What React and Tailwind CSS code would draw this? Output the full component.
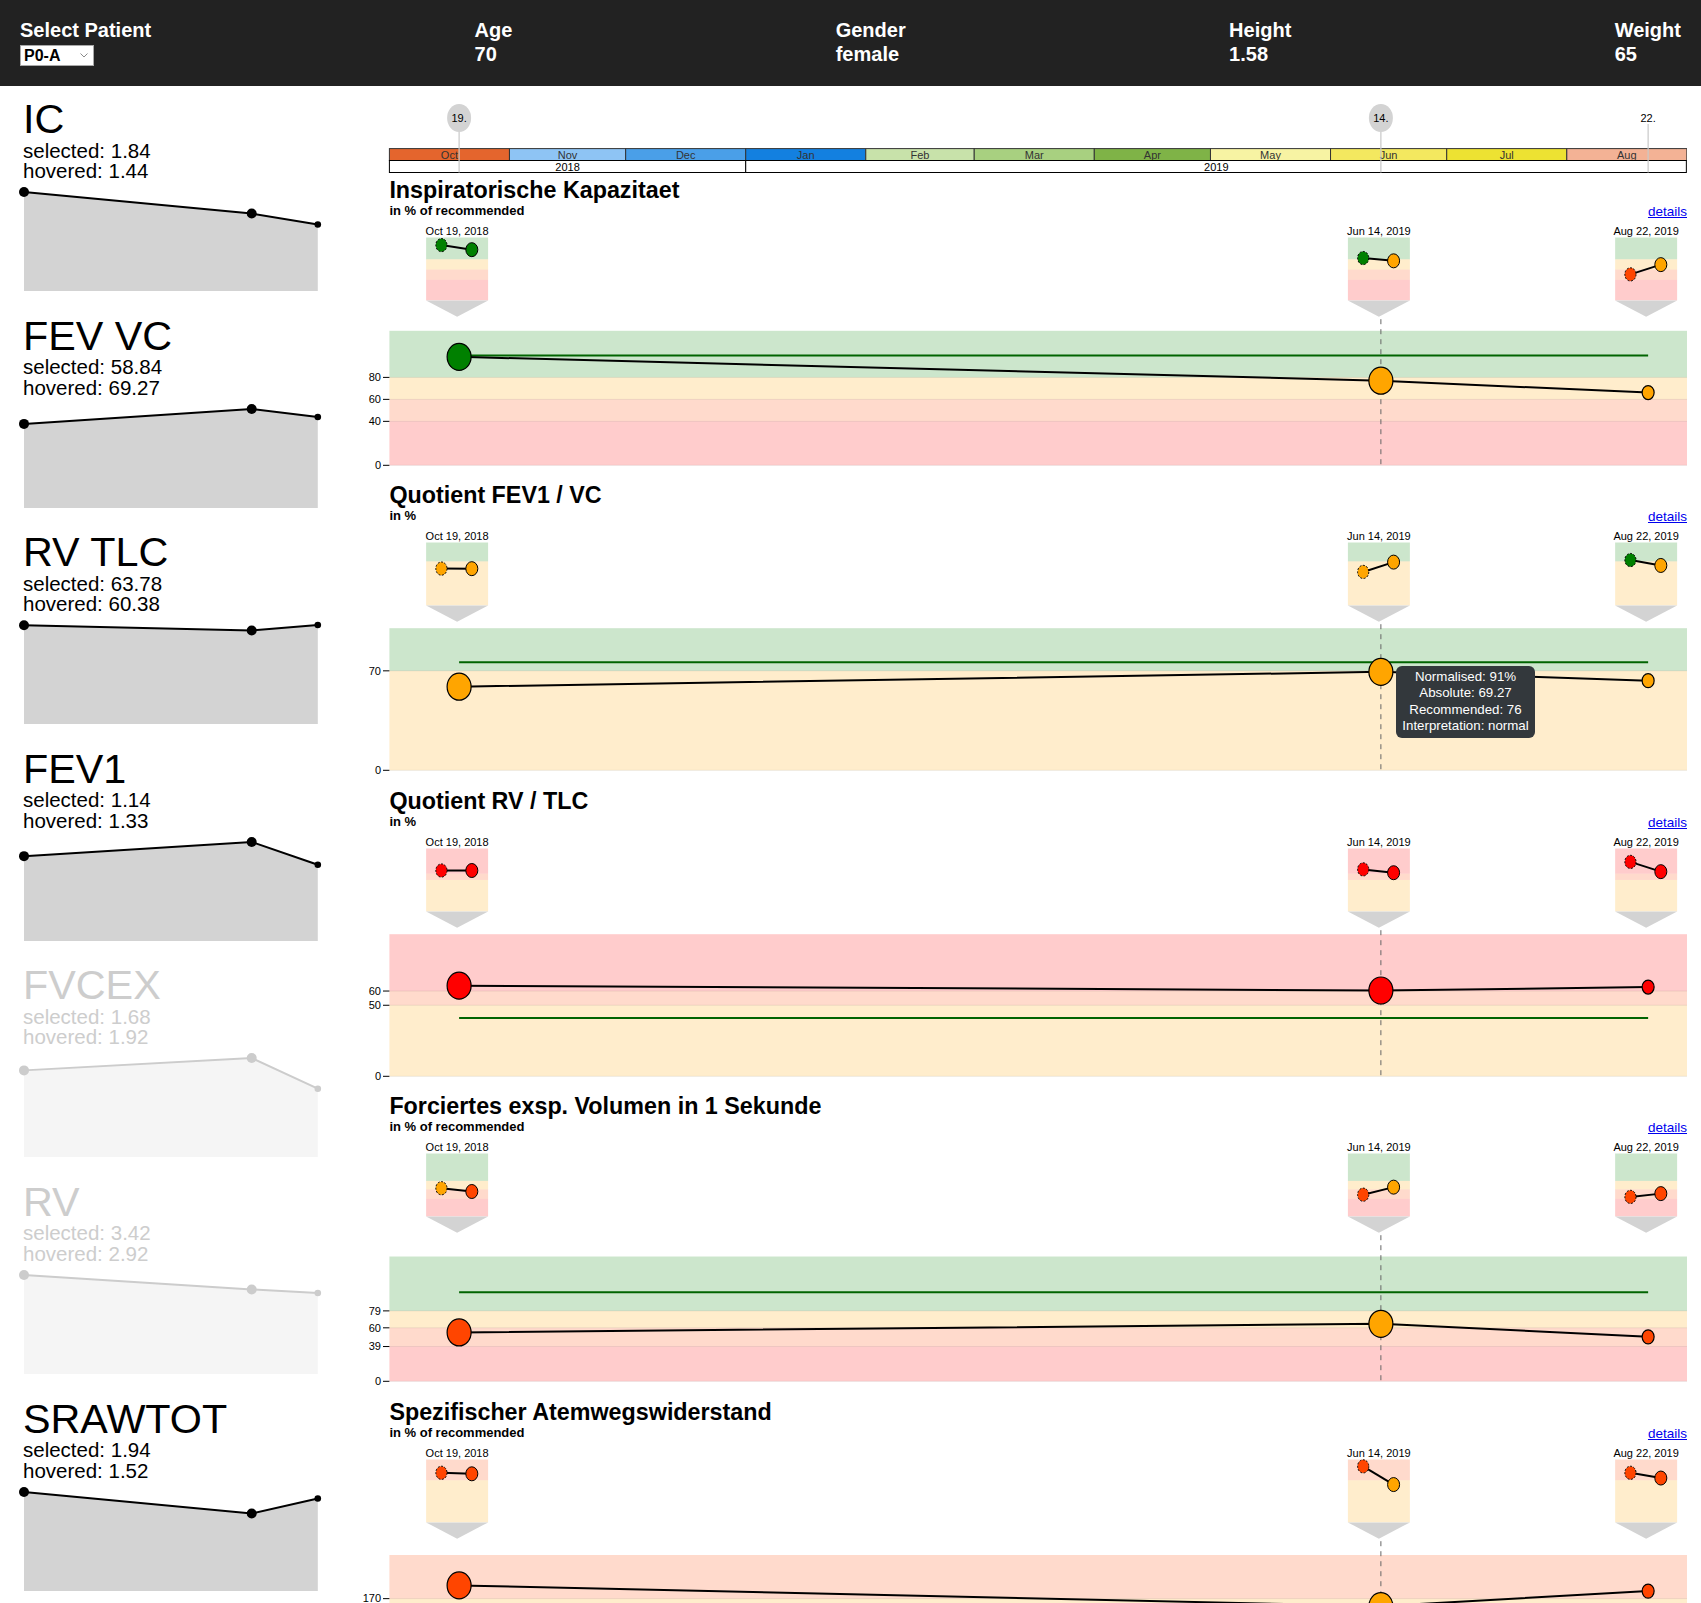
import React from 'react';

const G = '#008000';
const O = '#ffa500';
const OR = '#ff4500';
const R = '#ff0000';

// time axis: days since Oct 1, 2018
const X = (d) => 49.4 + d * 3.873;
const DATES = [18, 256, 325];
const LABELS = ['Oct 19, 2018', 'Jun 14, 2019', 'Aug 22, 2019'];
const MARKS = ['19.', '14.', '22.'];
// svg starts this far below the title's cap line
const OFF = 39;

const MONTHS = [
  { n: 'Oct', s: 0, e: 31, c: '#e4652d' },
  { n: 'Nov', s: 31, e: 61, c: '#8ec4f4' },
  { n: 'Dec', s: 61, e: 92, c: '#4a9fe8' },
  { n: 'Jan', s: 92, e: 123, c: '#1380e0' },
  { n: 'Feb', s: 123, e: 151, c: '#c8e2aa' },
  { n: 'Mar', s: 151, e: 182, c: '#a8d080' },
  { n: 'Apr', s: 182, e: 212, c: '#7fb347' },
  { n: 'May', s: 212, e: 243, c: '#f7f3a3' },
  { n: 'Jun', s: 243, e: 273, c: '#f3e85f' },
  { n: 'Jul', s: 273, e: 304, c: '#ede232' },
  { n: 'Aug', s: 304, e: 335, c: '#f3b295' },
];

const SPARKS = [
  { name: 'IC', sel: 1.84, hov: 1.44, last: 1.236 },
  { name: 'FEV VC', sel: 58.84, hov: 69.27, last: 63.7 },
  { name: 'RV TLC', sel: 63.78, hov: 60.38, last: 63.9 },
  { name: 'FEV1', sel: 1.14, hov: 1.33, last: 1.024 },
  { name: 'FVCEX', sel: 1.68, hov: 1.92, last: 1.325, faded: true },
  { name: 'RV', sel: 3.42, hov: 2.92, last: 2.798, faded: true },
  { name: 'SRAWTOT', sel: 1.94, hov: 1.52, last: 1.813 },
];

const CHARTS = [
  {
    title: 'Inspiratorische Kapazitaet', unit: 'in % of recommended', pTop: 150.8, yMax: 122.4,
    zones: [[80, G], [60, O], [40, OR], [0, R]], ticks: [80, 60, 40, 0], ref: 100,
    data: [98.7, 77, 66.2], mini: [[107.6, 98.7], [82.4, 77], [50.6, 69.6]],
  },
  {
    title: 'Quotient FEV1 / VC', unit: 'in %', pTop: 143.2, yMax: 100,
    zones: [[70, G], [0, O]], ticks: [70, 0], ref: 76,
    data: [58.84, 69.27, 63.1], mini: [[58.5, 58.4], [53.2, 68.8], [72.1, 63.5]], tooltip: true,
  },
  {
    title: 'Quotient RV / TLC', unit: 'in %', pTop: 143.2, yMax: 100,
    zones: [[60, R], [50, OR], [0, O]], ticks: [60, 50, 0], ref: 41,
    data: [63.78, 60.38, 62.8], mini: [[65, 65], [66.8, 61.5], [78.7, 63.2]],
  },
  {
    title: 'Forciertes exsp. Volumen in 1 Sekunde', unit: 'in % of recommended', pTop: 160.5, yMax: 140,
    zones: [[79, G], [60, O], [39, OR], [0, R]], ticks: [79, 60, 39, 0], ref: 100,
    data: [54.8, 64.5, 49.9], mini: [[62.7, 55.4], [48.3, 65.1], [43.4, 50.7]],
  },
  {
    title: 'Spezifischer Atemwegswiderstand', unit: 'in % of recommended', pTop: 153, yMax: 253.7,
    zones: [[170, OR], [0, O]], ticks: [170, 0], ref: 100,
    data: [195.4, 155.6, 184.5], mini: [[200, 196], [226, 152.6], [200, 178.9]],
  },
];

function Spark({ s }) {
  const max = Math.max(s.sel, s.hov, s.last);
  const y = (v) => 109 - (v / max) * 99;
  const pts = [[24, y(s.sel)], [251.7, y(s.hov)], [317.8, y(s.last)]];
  const line = pts.map((p) => p.join(',')).join(' ');
  const ink = s.faded ? '#cccccc' : '#000000';
  return (
    <div className={`h-[216.6px] ${s.faded ? 'text-[#cdcdcd]' : 'text-black'}`}>
      <div className="pl-[23px] pt-[0.6px] text-[41.3px] leading-[41.4px]">{s.name}</div>
      <div className="pl-[23px] text-[20.5px] leading-[20.6px]">selected: {s.sel}</div>
      <div className="pl-[23px] text-[20.5px] leading-[20.6px]">hovered: {s.hov}</div>
      <svg width="340" height="112" className="mt-[0.3px] block">
        <polygon points={`24,109 ${line} 317.8,109`} fill={s.faded ? '#f5f5f5' : '#d3d3d3'} />
        <polyline points={line} fill="none" stroke={ink} strokeWidth="2" />
        <circle cx={pts[0][0]} cy={pts[0][1]} r="5" fill={ink} />
        <circle cx={pts[1][0]} cy={pts[1][1]} r="5" fill={ink} />
        <circle cx={pts[2][0]} cy={pts[2][1]} r="3.3" fill={ink} />
      </svg>
    </div>
  );
}

function Timeline() {
  return (
    <svg width="1347" height="90" className="block">
      {MONTHS.map((m) => (
        <g key={m.n}>
          <rect x={X(m.s)} y="62.6" width={X(m.e) - X(m.s)} height="11.9" fill={m.c} stroke="#333" strokeWidth="1" />
          <text x={(X(m.s) + X(m.e)) / 2} y="72.8" textAnchor="middle" fontSize="11" fill="#333">{m.n}</text>
        </g>
      ))}
      <rect x={X(0)} y="74.5" width={X(92) - X(0)} height="12" fill="#fff" stroke="#000" />
      <rect x={X(92)} y="74.5" width={X(335) - X(92) - 0.5} height="12" fill="#fff" stroke="#000" />
      <text x={(X(0) + X(92)) / 2} y="84.6" textAnchor="middle" fontSize="11" fill="#000">2018</text>
      <text x={(X(92) + X(335)) / 2} y="84.6" textAnchor="middle" fontSize="11" fill="#000">2019</text>
      {DATES.map((d, i) => (
        <g key={d}>
          <line x1={X(d)} x2={X(d)} y1={i < 2 ? 45 : 38} y2="86.5" stroke="#c8c8c8" strokeWidth="1.2" />
          {i < 2 && <ellipse cx={X(d)} cy="32" rx="12" ry="14" fill="#d3d3d3" />}
          <text x={X(d)} y="36" textAnchor="middle" fontSize="11" fill="#000">{MARKS[i]}</text>
        </g>
      ))}
    </svg>
  );
}

function Chart({ c }) {
  const bottom = 285.3 - OFF;
  const top = c.pTop - OFF;
  const boxTop = 57.5 - OFF;
  const boxBottom = 120.4 - OFF;
  const tip = 136.7 - OFF;
  const Y = (v) => bottom - (v / c.yMax) * (bottom - top);
  const k = (boxBottom - boxTop) / (bottom - top);
  const BY = (v) => boxTop + (Y(v) - top) * k;
  const colorOf = (v) => (c.zones.find((z) => v >= z[0]) || c.zones[c.zones.length - 1])[1];
  const bands = c.zones.map((z, i) => [z[0], i === 0 ? c.yMax : c.zones[i - 1][0], z[1]]);
  const line = DATES.map((d, i) => `${X(d)},${Y(c.data[i])}`).join(' ');

  return (
    <div className="relative h-[305.4px]">
      <h3 className="ml-[49.4px] pt-[2px] text-[23.3px] font-bold leading-[24px]">{c.title}</h3>
      <div className="ml-[49.4px] mt-[1px] flex h-[16px] items-center justify-between">
        <span className="text-[13px] font-bold leading-[16px]">{c.unit}</span>
        <a href="#details" className="mt-[2px] text-[13.5px] leading-[16px] text-[#0000ee] underline">details</a>
      </div>
      <svg width="1347" height="262.4" className="block overflow-visible">
        {/* mini glyphs */}
        {DATES.map((d, i) => {
          const cx = X(d) - 2;
          const left = cx - 31;
          const [a, b] = c.mini[i];
          return (
            <g key={d}>
              <text x={cx} y={55.3 - OFF} textAnchor="middle" fontSize="11" fill="#000">{LABELS[i]}</text>
              {bands.map(([lo, hi, col]) => (
                <rect key={lo} x={left} y={BY(hi)} width="62" height={BY(lo) - BY(hi)} fill={col} fillOpacity="0.2" />
              ))}
              <polygon points={`${left},${boxBottom} ${left + 62},${boxBottom} ${cx},${tip}`} fill="#d3d3d3" />
              <line x1={left + 15.3} y1={BY(a)} x2={left + 45.7} y2={BY(b)} stroke="#000" strokeWidth="2" />
              <ellipse cx={left + 15.3} cy={BY(a)} rx="5.6" ry="6.6" fill={colorOf(a)} stroke="#000" strokeWidth="1" strokeDasharray="2 1.5" />
              <ellipse cx={left + 45.7} cy={BY(b)} rx="6" ry="7" fill={colorOf(b)} stroke="#000" strokeWidth="1" />
            </g>
          );
        })}

        {/* zones */}
        {bands.map(([lo, hi, col]) => (
          <rect key={lo} x="49.4" y={Y(hi)} width="1297.6" height={Y(lo) - Y(hi)} fill={col} fillOpacity="0.2" />
        ))}
        {c.ticks.map((t) => (
          <g key={t}>
            <line x1="49.4" x2="1347" y1={Y(t)} y2={Y(t)} stroke="#000" strokeOpacity="0.07" />
            <line x1="43" x2="49.4" y1={Y(t)} y2={Y(t)} stroke="#000" strokeWidth="1" />
            <text x="41" y={Y(t) + 3.8} textAnchor="end" fontSize="11" fill="#000">{t}</text>
          </g>
        ))}

        <line x1={X(DATES[1])} x2={X(DATES[1])} y1={tip + 2.5} y2={bottom} stroke="#666" strokeWidth="1" strokeDasharray="5 5" />
        <line x1={X(DATES[0])} x2={X(DATES[2])} y1={Y(c.ref)} y2={Y(c.ref)} stroke="#006400" strokeWidth="2" />
        <polyline points={line} fill="none" stroke="#000" strokeWidth="2" />
        {DATES.map((d, i) => (
          <ellipse
            key={d}
            cx={X(d)}
            cy={Y(c.data[i])}
            rx={i < 2 ? 12 : 6}
            ry={i < 2 ? 13.5 : 7}
            fill={colorOf(c.data[i])}
            stroke="#000"
            strokeWidth="1.2"
          />
        ))}
      </svg>
      {c.tooltip && (
        <div className="absolute left-[1056px] top-[184.6px] w-[139px] rounded-[6px] bg-[#33383c] py-[3.2px] text-center text-[13.3px] leading-[16.3px] text-white">
          <div>Normalised: 91%</div>
          <div>Absolute: 69.27</div>
          <div>Recommended: 76</div>
          <div>Interpretation: normal</div>
        </div>
      )}
    </div>
  );
}

export default function App() {
  return (
    <div className="h-screen overflow-hidden bg-white font-['Liberation_Sans',Arial,sans-serif] text-black">
      <header className="flex h-[86px] justify-between bg-[#222222] px-5 pt-[18px] text-[20px] font-bold leading-6 text-white">
        <div>
          <div>Select Patient</div>
          <div className="relative mt-[2.5px] h-[21px] w-[74px]">
            <select className="block h-full w-full appearance-none border border-[#a9a9a9] bg-white pl-[3px] text-[16px] font-bold leading-[19px] text-black">
              <option>P0-A</option>
            </select>
            <svg className="pointer-events-none absolute left-[60px] top-[8px]" width="8" height="5" viewBox="0 0 8 5">
              <polyline points="0.5,0.5 4,4 7.5,0.5" fill="none" stroke="#8a8a8a" strokeWidth="1" />
            </svg>
          </div>
        </div>
        <div><div>Age</div><div>70</div></div>
        <div><div>Gender</div><div>female</div></div>
        <div><div>Height</div><div>1.58</div></div>
        <div><div>Weight</div><div>65</div></div>
      </header>
      <div className="flex">
        <aside className="w-[340px] shrink-0 pt-[12.5px]">
          {SPARKS.map((s) => (
            <Spark key={s.name} s={s} />
          ))}
        </aside>
        <main className="w-[1347px] shrink-0">
          <Timeline />
          {CHARTS.map((c) => (
            <Chart key={c.title} c={c} />
          ))}
        </main>
      </div>
    </div>
  );
}
